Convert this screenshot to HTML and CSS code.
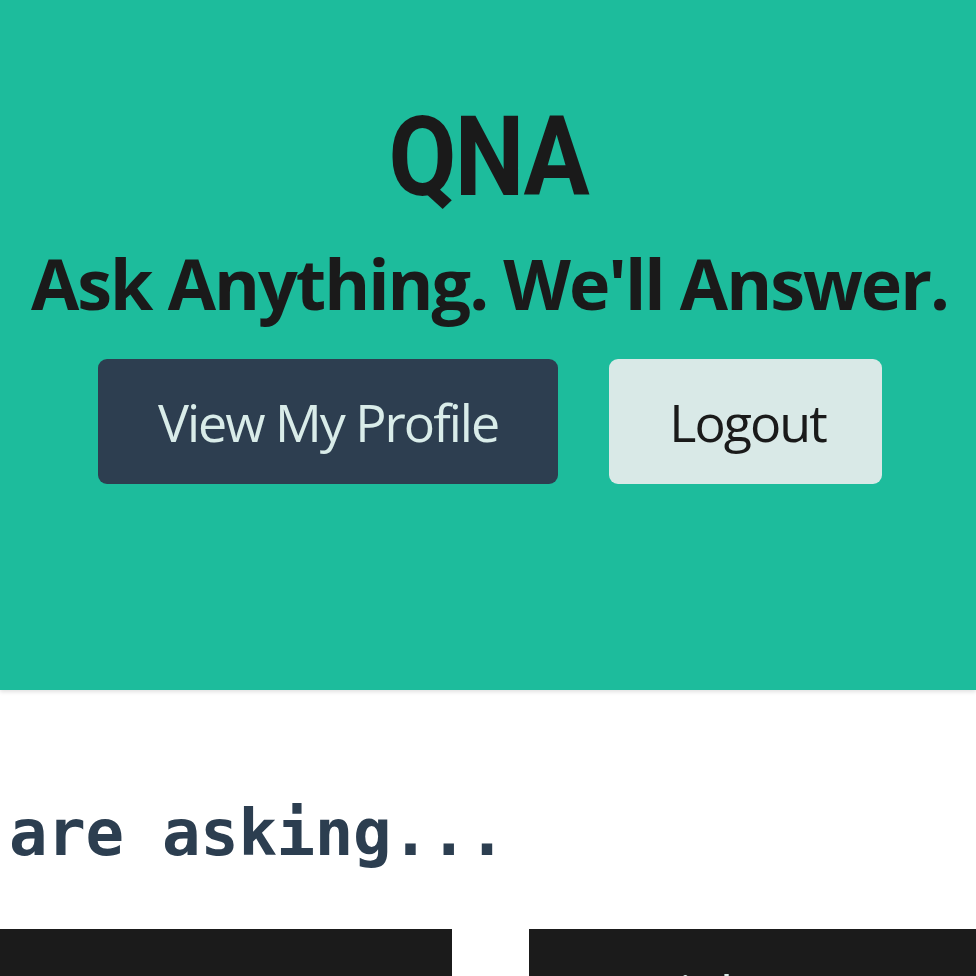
FILE: index.html
```html
<!DOCTYPE html>
<html lang="en">
<head>
<meta charset="utf-8">
<title>QNA</title>
<link rel="stylesheet" href="styles.css">
</head>
<body>
<header class="hero">
  <h1 class="logo">QNA</h1>
  <h2 class="tagline">Ask Anything. We'll Answer.</h2>
  <div class="actions">
    <a class="btn btn-dark" href="#">View My Profile</a>
    <a class="btn btn-light" href="#">Logout</a>
  </div>
</header>
<main class="feed">
  <h3 class="feed-title">are asking...</h3>
  <div class="cards">
    <article class="card"></article>
    <article class="card"><p class="card-text">tonight</p></article>
  </div>
</main>
</body>
</html>
```
FILE: styles.css
```css
html, body {
  margin: 0;
  padding: 0;
  background: #ffffff;
  overflow: hidden;
}
body {
  font-family: "Open Sans", "Noto Sans", sans-serif;
  color: #1a1a1a;
}
.hero {
  background: #1dbc9c;
  height: 690px;
  box-shadow: 0 2px 4px rgba(0, 0, 0, 0.12);
  display: flex;
  flex-direction: column;
  align-items: center;
  padding-top: 101px;
  box-sizing: border-box;
  position: relative;
}
.logo {
  margin: 0;
  font-family: Roboto, "Liberation Sans", sans-serif;
  font-weight: 700;
  font-size: 112px;
  line-height: 1;
  letter-spacing: -2px;
  color: #1a1a1a;
  transform: scaleX(0.88);
}
.tagline {
  margin: 35px 0 0;
  font-weight: 700;
  font-size: 70px;
  line-height: 1;
  letter-spacing: -2px;
  color: #1a1a1a;
  white-space: nowrap;
  padding-left: 3px;
}
.actions {
  margin-top: 41px;
  display: flex;
  gap: 51px;
  padding-left: 4px;
}
.btn {
  height: 125px;
  box-sizing: border-box;
  display: flex;
  align-items: center;
  justify-content: center;
  border-radius: 9px;
  font-size: 52px;
  line-height: 1;
  text-decoration: none;
  letter-spacing: -2px;
}
.btn-dark {
  width: 460px;
  background: #2d3e50;
  color: #d9ece9;
}
.btn-light {
  width: 273px;
  background: #d9e9e7;
  color: #1a1a1a;
  padding-left: 4px;
}
.feed {
  padding-top: 111px;
}
.feed-title {
  margin: 0;
  padding-left: 9px;
  font-family: "DejaVu Sans Mono", "Liberation Mono", monospace;
  font-weight: 700;
  font-size: 64px;
  line-height: 1;
  letter-spacing: -0.3px;
  color: #2c3e50;
}
.cards {
  margin-top: 64px;
  display: grid;
  grid-template-columns: 452px 470px;
  gap: 77px;
}
.card {
  background: #1b1b1b;
  height: 300px;
  padding: 38px 60px 0 68px;
  box-sizing: border-box;
}
.card-text {
  margin: 0;
  font-size: 52px;
  line-height: 1;
  color: #d9ece9;
}
```
